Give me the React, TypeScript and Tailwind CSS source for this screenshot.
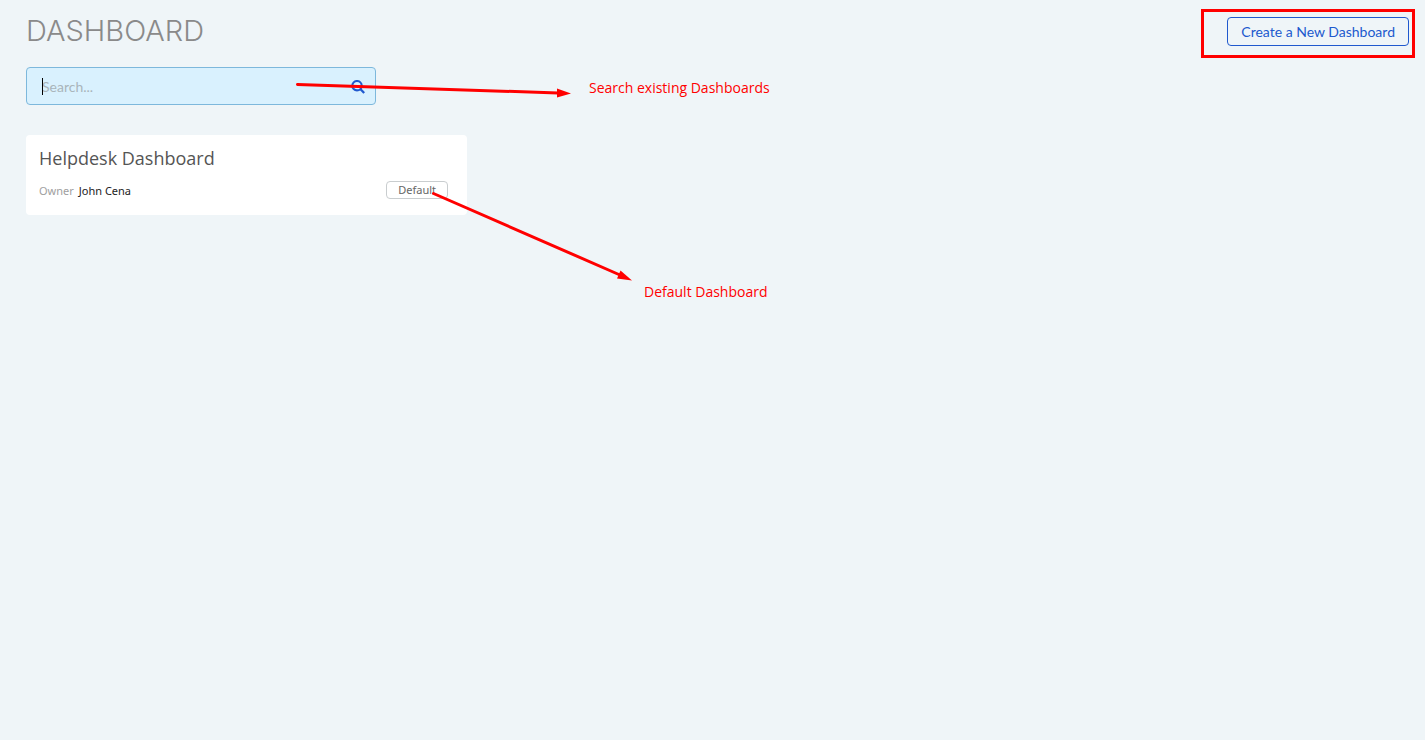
import { useState } from 'react';

const dashboards = [{ name: 'Helpdesk Dashboard', owner: 'John Cena', isDefault: true }];

function SearchIcon() {
  return (
    <svg width="14" height="14" viewBox="0 0 14 14" fill="none" stroke="currentColor" aria-hidden="true">
      <circle cx="6" cy="5.7" r="4.7" strokeWidth="2.1" />
      <path d="M9.3 9 L13.2 13" strokeWidth="2.3" />
    </svg>
  );
}

function Annotations() {
  return (
    <div className="pointer-events-none absolute inset-0 font-['Open_Sans',sans-serif] text-sm leading-5 text-[#ff0000]">
      <svg className="absolute left-0 top-0" width="660" height="320" fill="#ff0000" stroke="#ff0000" aria-hidden="true">
        <path d="M297.5 84.5 L558 93" strokeWidth="3" strokeLinecap="round" />
        <path d="M557 88.5 L571 93.5 L557 97.5 Z" stroke="none" />
        <path d="M433.5 193.5 L620 275" strokeWidth="3" strokeLinecap="round" />
        <path d="M620.5 270.5 L632 280.5 L617 278.5 Z" stroke="none" />
      </svg>
      <p className="absolute left-[589px] top-[78px] whitespace-nowrap">Search existing Dashboards</p>
      <p className="absolute left-[644px] top-[282px] whitespace-nowrap">Default Dashboard</p>
    </div>
  );
}

export default function App() {
  const [query, setQuery] = useState('');

  const visible = dashboards.filter((d) => d.name.toLowerCase().includes(query.toLowerCase()));

  return (
    <div className="relative min-h-screen bg-[#eff5f8] pl-[26px] pr-[10px] pt-[9px] font-['Noto_Sans',sans-serif]">
      <header className="flex items-start justify-between">
        <h1 className="pt-1 font-['Inter',sans-serif] text-[29px] font-light leading-9 text-[#8a8a8a]">DASHBOARD</h1>
        <div className="border-[3px] border-[#ff0000] pb-[9px] pl-[23px] pr-[3px] pt-[5px]">
          <button
            type="button"
            className="block h-[29px] rounded border border-[#2059ce] px-[13px] font-['Lato',sans-serif] text-sm leading-5 text-[#2059ce]"
          >
            Create a New Dashboard
          </button>
        </div>
      </header>

      <div className="relative mt-[9px] w-[350px]">
        <input
          type="text"
          aria-label="Search dashboards"
          placeholder="Search..."
          value={query}
          onChange={(e) => setQuery(e.target.value)}
          className="h-[38px] w-full rounded border border-[#7db8dc] bg-[#d9f1fe] pl-[15px] pr-9 font-['Lato',sans-serif] text-sm text-gray-700 outline-none placeholder:text-[#a9b5bb]"
        />
        {!query && <span className="absolute left-4 top-[11px] h-[17px] w-px bg-black" />}
        <button type="button" aria-label="Search" className="absolute right-[11px] top-[13px] text-[#2059ce]">
          <SearchIcon />
        </button>
      </div>

      <main className="mt-[30px] flex flex-wrap gap-4">
        {visible.map((d) => (
          <section key={d.name} className="h-20 w-[441px] rounded bg-white pl-[13px] pr-[19px] pt-[11px]">
            <h2 className="font-['Open_Sans',sans-serif] text-lg leading-6 text-[#555555]">{d.name}</h2>
            <div className="mt-[11px] flex items-start justify-between text-[11px]">
              <p className="flex gap-[5px] leading-5">
                <span className="text-[#a0a0a0]">Owner</span>
                <span className="text-[#222222]">{d.owner}</span>
              </p>
              {d.isDefault && (
                <span className="h-[18px] rounded border border-[#c9cdcf] px-[11px] leading-4 text-[#666666]">Default</span>
              )}
            </div>
          </section>
        ))}
      </main>

      <Annotations />
    </div>
  );
}
